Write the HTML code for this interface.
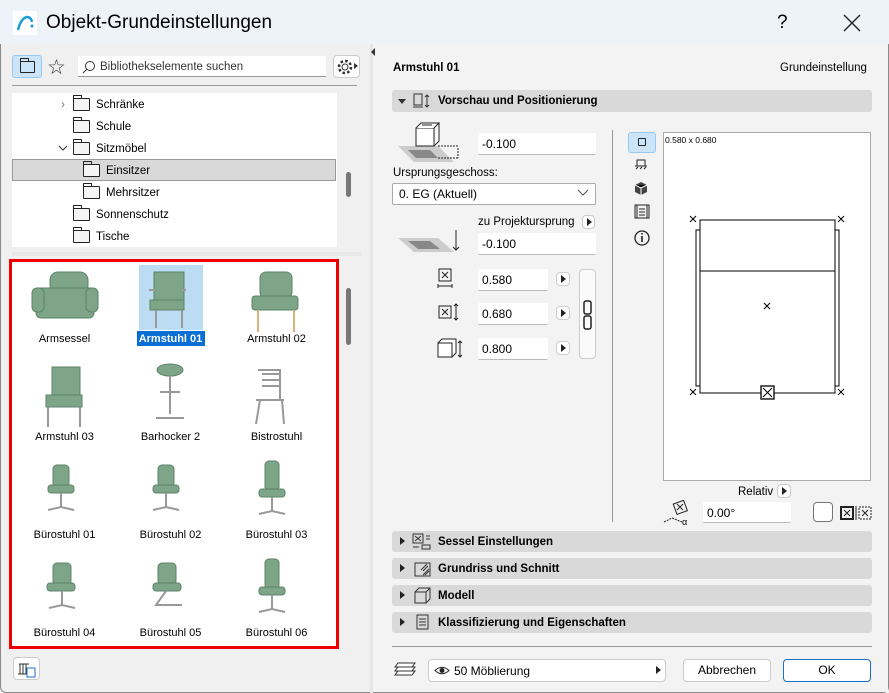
<!DOCTYPE html>
<html><head><meta charset="utf-8"><style>
*{box-sizing:border-box;margin:0;padding:0}
body{width:889px;height:693px;overflow:hidden;background:#f0f0f0;font-family:"Liberation Sans",sans-serif;font-size:12px;color:#000;position:relative}
.a{position:absolute}
.title{left:0;top:0;width:889px;height:44px;background:#eef3f9}
.inp{position:absolute;background:#fff;border-bottom:1px solid #bbb;border-radius:2px;padding-left:4px;line-height:23px;font-size:12px}
.btn{position:absolute;background:#fff;border:1px solid #ccc;border-radius:4px}
.tri{position:absolute;width:0;height:0;border-top:4px solid transparent;border-bottom:4px solid transparent;border-left:5px solid #222}
.sec{position:absolute;left:392px;width:480px;height:21px;background:#d9d9d9;border-radius:3px;font-weight:bold;font-size:11.5px;line-height:23px}
.sec span{position:absolute;left:46px}
.row{position:absolute;height:22px;line-height:24px;font-size:11.5px}
.fold{position:absolute;width:17px;height:13px;border:1px solid #222;border-radius:1px;background:#f4f4f4}
.fold:before{content:"";position:absolute;left:-1px;top:-4px;width:7px;height:3px;border:1px solid #222;border-bottom:none;border-radius:1px 1px 0 0}
.lbl{position:absolute;width:105px;text-align:center;font-size:11px}
</style></head><body>
<div class="a" style="left:0;top:0;width:889px;height:693px;border:1px solid #8a8a8a;border-radius:6px"></div>
<div class="a title"></div>
<svg class="a" style="left:13px;top:11px" width="24" height="24"><rect width="24" height="24" fill="#fff"/><path d="M5 19 Q8 7 14 6 Q18 6 19 11" stroke="#1b9bd7" stroke-width="2.5" fill="none"/><circle cx="19" cy="15" r="1.5" fill="#1b9bd7"/></svg>
<div class="a" style="left:46px;top:12px;font-size:19px">Objekt-Grundeinstellungen</div>
<div class="a" style="left:777px;top:12px;font-size:19px">?</div>
<svg class="a" style="left:843px;top:14px" width="18" height="18"><path d="M1 1L17 17M17 1L1 17" stroke="#222" stroke-width="1.4"/></svg>
<div class="a" style="left:370px;top:44px;width:3px;height:649px;background:#e6e6e6"></div>
<div class="a" style="left:373px;top:44px;width:515px;height:648px;background:#f3f3f3"></div>
<div class="a" style="left:371px;top:48px;width:0;height:0;border-top:4px solid transparent;border-bottom:4px solid transparent;border-right:4px solid #333"></div>
<div class="a" style="left:12px;top:55px;width:30px;height:23px;background:#cce4f7;border:1px solid #99c9ef;border-radius:3px"></div>
<div class="fold" style="left:20px;top:61px;width:15px;height:12px;background:none"></div>
<div class="a" style="left:47px;top:55px;font-size:21px;color:#333">☆</div>
<div class="a" style="left:78px;top:56px;width:248px;height:21px;background:#fff;border-bottom:1px solid #999"></div>
<svg class="a" style="left:82px;top:60px" width="14" height="14"><circle cx="8" cy="6" r="4.5" stroke="#333" fill="none"/><path d="M5 9L1 13" stroke="#333"/></svg>
<div class="a" style="left:100px;top:61px;font-size:11.5px;color:#333">Bibliothekselemente suchen</div>
<div class="btn" style="left:333px;top:55px;width:27px;height:23px"></div>
<svg class="a" style="left:336px;top:58px" width="18" height="18"><circle cx="9" cy="9" r="3" fill="none" stroke="#333"/><circle cx="9" cy="9" r="6" fill="none" stroke="#333" stroke-width="2.5" stroke-dasharray="2.5 2.2"/></svg>
<div class="a" style="left:354px;top:63px;width:0;height:0;border-top:3px solid transparent;border-bottom:3px solid transparent;border-left:4px solid #333"></div>
<div class="a" style="left:12px;top:85px;width:345px;height:1px;background:#999"></div>
<div class="a" style="left:12px;top:93px;width:325px;height:154px;background:#fff"></div>
<div class="a" style="left:12px;top:159px;width:324px;height:22px;background:#d9d9d9;border:1px solid #999"></div>
<div class="a" style="left:61px;top:97px;color:#777;font-size:12px">›</div>
<svg class="a" style="left:58px;top:145px" width="10" height="7"><path d="M1 1l4 4 4-4" stroke="#333" fill="none"/></svg>
<div class="fold" style="left:73px;top:98px"></div><div class="row" style="left:96px;top:93px">Schränke</div>
<div class="fold" style="left:73px;top:120px"></div><div class="row" style="left:96px;top:115px">Schule</div>
<div class="fold" style="left:73px;top:142px"></div><div class="row" style="left:96px;top:137px">Sitzmöbel</div>
<div class="fold" style="left:83px;top:164px"></div><div class="row" style="left:106px;top:159px">Einsitzer</div>
<div class="fold" style="left:83px;top:186px"></div><div class="row" style="left:106px;top:181px">Mehrsitzer</div>
<div class="fold" style="left:73px;top:208px"></div><div class="row" style="left:96px;top:203px">Sonnenschutz</div>
<div class="fold" style="left:73px;top:230px"></div><div class="row" style="left:96px;top:225px">Tische</div>
<div class="a" style="left:346px;top:172px;width:5px;height:25px;background:#777;border-radius:3px"></div>
<div class="a" style="left:12px;top:252px;width:350px;height:4px;background:#e8e8e8"></div>
<div class="a" style="left:9px;top:259px;width:330px;height:390px;background:#fff;border:3px solid #e00"></div>
<div class="a" style="left:346px;top:288px;width:5px;height:57px;background:#777;border-radius:3px"></div>
<div class="a" style="left:139px;top:265px;width:64px;height:65px;background:#bcdcf4"></div>
<svg class="a" style="left:12px;top:262px" width="325" height="385">
<g fill="#7ea588" stroke="#5d8468" stroke-width="1">
<rect x="38" y="10" width="38" height="22" rx="8"/><rect x="24" y="26" width="58" height="30" rx="5"/><rect x="20" y="26" width="12" height="24" rx="5"/><rect x="74" y="26" width="12" height="24" rx="5"/>
<rect x="142" y="10" width="30" height="30" /><rect x="138" y="38" width="34" height="10"/>
<rect x="248" y="10" width="32" height="26" rx="6"/><rect x="240" y="34" width="46" height="14" rx="3"/>
<rect x="40" y="105" width="28" height="30"/><rect x="34" y="133" width="36" height="12"/>
<ellipse cx="158" cy="108" rx="13" ry="6"/>
<rect x="41" y="203" width="16" height="22" rx="4"/><rect x="36" y="223" width="26" height="8" rx="3"/>
<rect x="146" y="203" width="16" height="22" rx="4"/><rect x="141" y="223" width="26" height="8" rx="3"/>
<rect x="253" y="199" width="14" height="30" rx="4"/><rect x="247" y="227" width="26" height="8" rx="3"/>
<rect x="41" y="301" width="18" height="22" rx="4"/><rect x="35" y="321" width="28" height="8" rx="3"/>
<rect x="146" y="301" width="18" height="22" rx="4"/><rect x="141" y="321" width="28" height="8" rx="3"/>
<rect x="253" y="297" width="14" height="30" rx="4"/><rect x="247" y="325" width="26" height="8" rx="3"/>
</g>
<g stroke="#999" stroke-width="2" fill="none">
<path d="M144 48v18M170 48v18M137 28h6M174 28h-4"/>
<path d="M246 48v22M282 48v22" stroke="#d9b27c"/>
<path d="M36 145v20M68 145v20"/>
<path d="M158 114v38M148 130h20M144 156h28"/>
<path d="M246 108h22v30M244 138h28M248 138l-4 24M270 138l2 24M250 112h18M250 118h18M250 124h18"/>
<path d="M49 231v14M36 248l13-3 13 3M154 231v14M141 248l13-3 13 3M260 235v14M247 252l13-3 13 3"/>
<path d="M50 329v14M37 346l13-3 13 3M154 329l-10 14h26M260 333v14M247 350l13-3 13 3"/>
</g>
</svg>
<div class="lbl" style="left:12px;top:333px">Armsessel</div>
<div class="a" style="left:137px;top:331px;width:68px;height:15px;background:#0a6fd4"></div>
<div class="lbl" style="left:118px;top:333px;color:#fff;font-weight:bold">Armstuhl 01</div>
<div class="lbl" style="left:224px;top:333px">Armstuhl 02</div>
<div class="lbl" style="left:12px;top:431px">Armstuhl 03</div>
<div class="lbl" style="left:118px;top:431px">Barhocker 2</div>
<div class="lbl" style="left:224px;top:431px">Bistrostuhl</div>
<div class="lbl" style="left:12px;top:529px">Bürostuhl 01</div>
<div class="lbl" style="left:118px;top:529px">Bürostuhl 02</div>
<div class="lbl" style="left:224px;top:529px">Bürostuhl 03</div>
<div class="lbl" style="left:12px;top:627px">Bürostuhl 04</div>
<div class="lbl" style="left:118px;top:627px">Bürostuhl 05</div>
<div class="lbl" style="left:224px;top:627px">Bürostuhl 06</div>
<div class="btn" style="left:13px;top:657px;width:27px;height:23px"></div>
<svg class="a" style="left:17px;top:660px" width="20" height="18"><path d="M2 4h10M3 4v10M6 4v10M9 4v10M1 14h12" stroke="#333" fill="none"/><rect x="10" y="8" width="8" height="9" fill="#fff" stroke="#1b6fc9"/></svg>
<div class="a" style="left:393px;top:62px;font-weight:bold;font-size:11.5px">Armstuhl 01</div>
<div class="a" style="left:780px;top:62px;font-size:11.5px">Grundeinstellung</div>
<div class="sec" style="top:90px;height:22px"><div class="a" style="left:6px;top:9px;border-left:4px solid transparent;border-right:4px solid transparent;border-top:5px solid #333"></div><svg class="a" style="left:20px;top:3px" width="20" height="16"><rect x="2" y="1" width="8" height="11" fill="none" stroke="#333"/><path d="M1 14h10M15 2v12M13 4l2-2 2 2M13 12l2 2 2-2" stroke="#333" fill="none"/></svg><span>Vorschau und Positionierung</span></div>
<svg class="a" style="left:398px;top:122px" width="68" height="42"><path d="M0 24h40l16 16H16z" fill="#ccc"/><path d="M10 28h22l8 8H18z" fill="#888"/><rect x="18" y="6" width="18" height="18" fill="#fff" stroke="#222"/><path d="M18 6l5-5h18l-5 5M41 1v18l-5 5M24 3l10 0" stroke="#222" fill="#fff"/><path d="M40 24h20M40 36h20M60 26v10" stroke="#222" stroke-dasharray="2 1" fill="none"/></svg>
<div class="inp" style="left:478px;top:133px;width:118px;height:22px">-0.100</div>
<div class="a" style="left:393px;top:167px;font-size:11.5px">Ursprungsgeschoss:</div>
<div class="inp" style="left:392px;top:183px;width:204px;height:22px;border:1px solid #aaa;padding-left:6px;line-height:21px">0. EG (Aktuell)</div>
<svg class="a" style="left:577px;top:189px" width="12" height="8"><path d="M1 1l5 5 5-5" stroke="#555" fill="none"/></svg>
<div class="a" style="left:478px;top:216px;font-size:11.5px">zu Projektursprung</div>
<div class="btn" style="left:582px;top:215px;width:13px;height:14px"></div><div class="tri" style="left:587px;top:218px"></div>
<svg class="a" style="left:398px;top:228px" width="66" height="26"><path d="M0 10h40l16 14H16z" fill="#ccc"/><path d="M10 13h22l10 8H20z" fill="#888"/><path d="M58 2v20M55 19l3 3 3-3" stroke="#222" fill="none"/></svg>
<div class="inp" style="left:478px;top:233px;width:118px;height:22px">-0.100</div>
<svg class="a" style="left:436px;top:267px" width="30" height="100"><rect x="3" y="2" width="12" height="12" fill="none" stroke="#222"/><path d="M6 5l6 6M12 5l-6 6M2 19h14M2 17v4M16 17v4" stroke="#222" fill="none"/><rect x="3" y="39" width="12" height="12" fill="none" stroke="#222"/><path d="M6 42l6 6M12 42l-6 6M20 37v16M18 39l2-2 2 2M18 51l2 2 2-2" stroke="#222" fill="none"/><path d="M2 76h14v14H2zM2 76l4-4h14v14l-4 4M20 72" stroke="#222" fill="#fff"/><path d="M24 74v16M22 76l2-2 2 2M22 88l2 2 2-2" stroke="#222" fill="none"/></svg>
<div class="inp" style="left:478px;top:269px;width:70px;height:22px">0.580</div>
<div class="inp" style="left:478px;top:303px;width:70px;height:22px">0.680</div>
<div class="inp" style="left:478px;top:338px;width:70px;height:22px">0.800</div>
<div class="btn" style="left:556px;top:272px;width:14px;height:14px"></div><div class="tri" style="left:561px;top:275px"></div>
<div class="btn" style="left:556px;top:306px;width:14px;height:14px"></div><div class="tri" style="left:561px;top:309px"></div>
<div class="btn" style="left:556px;top:341px;width:14px;height:14px"></div><div class="tri" style="left:561px;top:344px"></div>
<div class="btn" style="left:579px;top:269px;width:17px;height:90px;background:#fafafa"></div>
<svg class="a" style="left:582px;top:300px" width="12" height="30"><rect x="2" y="1" width="7" height="13" rx="2" fill="none" stroke="#222" stroke-width="1.5"/><rect x="2" y="16" width="7" height="13" rx="2" fill="none" stroke="#222" stroke-width="1.5"/></svg>
<div class="a" style="left:612px;top:130px;width:1px;height:392px;background:#999"></div>
<div class="a" style="left:628px;top:132px;width:28px;height:21px;background:#cce4f7;border:1px solid #99c9ef;border-radius:3px"></div>
<div class="a" style="left:638px;top:138px;width:8px;height:8px;border:1px solid #222;border-radius:1px"></div>
<svg class="a" style="left:633px;top:158px" width="20" height="100"><path d="M4 2h8v6H4zM2 8h12M3 11l2-2M7 11l2-2M11 11l2-2" stroke="#222" fill="none"/><path d="M8 24l6 3v7l-6 3-6-3v-7z" fill="#444"/><path d="M2 27l6 3 6-3M8 30v7" stroke="#fff"/><rect x="2" y="47" width="14" height="13" fill="none" stroke="#222"/><path d="M4 47v13M14 47v13M6 51h6M6 54h6M6 57h6" stroke="#222"/><circle cx="9" cy="80" r="7" fill="none" stroke="#222" stroke-width="1.3"/><path d="M9 78v6M9 75v1.5" stroke="#222" stroke-width="1.6"/></svg>
<div class="a" style="left:663px;top:132px;width:208px;height:349px;background:#fff;border:1px solid #aaa"></div>
<div class="a" style="left:665px;top:135px;font-size:8.5px">0.580 x 0.680</div>
<svg class="a" style="left:663px;top:132px" width="208" height="349"><g stroke="#000" fill="none"><rect x="33" y="98" width="143" height="156"/><rect x="37" y="88" width="135" height="173" fill="#fff"/><path d="M37 139h135"/><path d="M27 84l6 6M33 84l-6 6M175 84l6 6M181 84l-6 6M27 257l6 6M33 257l-6 6M175 257l6 6M181 257l-6 6M101 171l6 6M107 171l-6 6"/><rect x="98" y="254" width="13" height="13" fill="#fff" stroke-width="1.3"/><path d="M100 256l9 9M109 256l-9 9"/></g></svg>
<div class="a" style="left:738px;top:486px;font-size:11.5px">Relativ</div>
<div class="btn" style="left:777px;top:484px;width:14px;height:14px"></div><div class="tri" style="left:782px;top:487px"></div>
<svg class="a" style="left:662px;top:500px" width="32" height="26"><rect x="13" y="2" width="11" height="11" transform="rotate(-20 18 8)" fill="none" stroke="#222"/><path d="M15 4l6 6M21 4l-6 6" stroke="#222"/><path d="M2 22l8-4 10 4" stroke="#222" stroke-dasharray="2 1" fill="none"/><text x="20" y="25" font-size="9" font-family="Liberation Sans">α</text></svg>
<div class="inp" style="left:703px;top:502px;width:88px;height:21px">0.00°</div>
<div class="btn" style="left:813px;top:502px;width:20px;height:20px;border-color:#777"></div>
<svg class="a" style="left:840px;top:505px" width="34" height="16"><rect x="1" y="2" width="12" height="12" fill="none" stroke="#222" stroke-width="2"/><path d="M4 5l6 6M10 5l-6 6M16 1v14" stroke="#222"/><rect x="19" y="2" width="12" height="12" fill="none" stroke="#222" stroke-dasharray="2 1"/><path d="M22 5l6 6M28 5l-6 6" stroke="#222"/></svg>
<div class="sec" style="top:531px"><div class="tri" style="left:8px;top:6px"></div><svg class="a" style="left:20px;top:2px" width="20" height="17"><rect x="1" y="1" width="10" height="9" fill="none" stroke="#333"/><path d="M3 3l6 5M9 3l-6 5M14 3h4M14 6h4M10 12h8v4h-8zM1 14h6" stroke="#333" fill="none"/></svg><span>Sessel Einstellungen</span></div>
<div class="sec" style="top:558px"><div class="tri" style="left:8px;top:6px"></div><svg class="a" style="left:22px;top:3px" width="18" height="16"><rect x="1" y="2" width="15" height="13" fill="none" stroke="#333"/><path d="M9 14l6-6M11 14l4-4M9 10l5-5M7 9l6-6" stroke="#333"/></svg><span>Grundriss und Schnitt</span></div>
<div class="sec" style="top:585px"><div class="tri" style="left:8px;top:6px"></div><svg class="a" style="left:22px;top:2px" width="18" height="17"><path d="M1 5h11v11H1zM1 5l4-4h11v11l-4 4M12 5l4-4" stroke="#333" fill="none"/></svg><span>Modell</span></div>
<div class="sec" style="top:612px"><div class="tri" style="left:8px;top:6px"></div><svg class="a" style="left:24px;top:2px" width="14" height="17"><rect x="1" y="1" width="11" height="14" fill="none" stroke="#333"/><path d="M3 5h7M3 8h7M3 11h7" stroke="#333"/></svg><span>Klassifizierung und Eigenschaften</span></div>
<div class="a" style="left:392px;top:646px;width:480px;height:1px;background:#999"></div>
<svg class="a" style="left:393px;top:661px" width="24" height="16"><path d="M5 2h17l-3 4H2zM5 6h17l-3 4H2zM5 10h17l-3 4H2z" stroke="#333" fill="#fff"/></svg>
<div class="btn" style="left:428px;top:659px;width:238px;height:23px"></div>
<svg class="a" style="left:434px;top:665px" width="16" height="11"><path d="M1 5.5Q8 -1 15 5.5Q8 12 1 5.5z" fill="none" stroke="#222"/><circle cx="8" cy="5.5" r="2.5" fill="#222"/></svg>
<div class="a" style="left:454px;top:664px;font-size:12px">50 Möblierung</div>
<div class="tri" style="left:656px;top:666px"></div>
<div class="btn" style="left:683px;top:659px;width:88px;height:23px;text-align:center;line-height:21px">Abbrechen</div>
<div class="btn" style="left:783px;top:659px;width:88px;height:23px;text-align:center;line-height:21px;border-color:#1a6fc9">OK</div>
</body></html>
